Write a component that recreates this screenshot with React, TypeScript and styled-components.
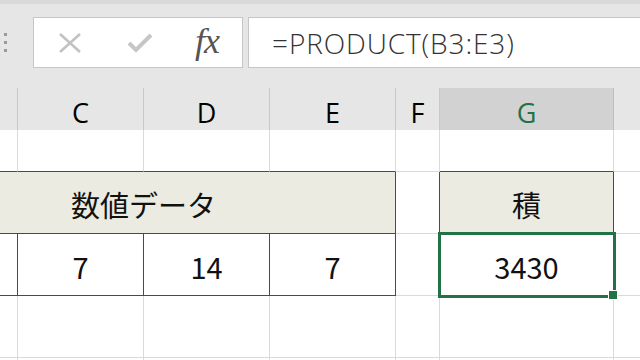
import React from 'react';
import styled, { createGlobalStyle } from 'styled-components';

const GlobalStyle = createGlobalStyle`
  html, body {
    margin: 0;
    padding: 0;
    background: #ffffff;
    overflow: hidden;
  }
`;

const GREEN = '#217346';
const GRID = '#dadada';
const DARK = '#4a4a4a';

const Page = styled.div`
  width: 640px;
  height: 360px;
  overflow: hidden;
  display: flex;
  flex-direction: column;
  background: #ffffff;
  font-family: "Noto Sans CJK JP", "Noto Sans", sans-serif;
`;

const TopStrip = styled.div`
  height: 4px;
  background: #d9d9d9;
  flex-shrink: 0;
`;

const FormulaBar = styled.div`
  height: 84px;
  flex-shrink: 0;
  background: #e6e6e6;
  display: flex;
  align-items: flex-start;
  padding: 13px 0 0 4px;
  box-sizing: border-box;
`;

const Grip = styled.div`
  width: 3px;
  margin-top: 16px;
  display: flex;
  flex-direction: column;
  gap: 5px;
  margin-right: 26px;

  span {
    width: 3px;
    height: 3px;
    background: #9a9a9a;
  }
`;

const ButtonBox = styled.div`
  width: 210px;
  height: 51px;
  box-sizing: border-box;
  background: #ffffff;
  border: 1px solid #c6c6c6;
  display: flex;
  align-items: center;
`;

const IconSlot = styled.div<{ $w: number }>`
  width: ${p => p.$w}px;
  display: flex;
  justify-content: center;
  align-items: center;
`;

const Fx = styled.span`
  font-family: "Liberation Serif", "DejaVu Serif", serif;
  font-style: italic;
  font-size: 36px;
  color: #555555;
  line-height: 1;
  margin-top: -4px;
  letter-spacing: -1px;
`;

const FormulaInput = styled.div`
  flex: 1;
  height: 51px;
  margin-left: 5px;
  box-sizing: border-box;
  background: #ffffff;
  border: 1px solid #c6c6c6;
  border-right: none;
  display: flex;
  align-items: center;
  padding-left: 23px;
  font-family: "Open Sans", "Noto Sans", sans-serif;
  font-weight: 300;
  font-size: 28px;
  color: #333333;
  letter-spacing: 0.9px;
`;

const COLS = '126px 126px 126px 126px 44px 174px 126px';

const HeaderRow = styled.div`
  display: grid;
  grid-template-columns: ${COLS};
  height: 42px;
  margin-left: -108px;
  flex-shrink: 0;
`;

const ColHead = styled.div<{ $active?: boolean }>`
  box-sizing: border-box;
  background: ${p => (p.$active ? '#d2d2d2' : '#e6e6e6')};
  border-right: 1px solid ${p => (p.$active ? '#bdbdbd' : '#c9c9c9')};
  border-bottom: ${p => (p.$active ? `3px solid ${GREEN}` : '2px solid #a9a9a9')};
  display: flex;
  align-items: center;
  justify-content: center;
  padding-top: ${p => (p.$active ? '6px' : '5px')};
  font-family: "Open Sans", "Noto Sans", sans-serif;
  font-size: 27px;
  color: ${p => (p.$active ? GREEN : '#000000')};
`;

const Body = styled.div`
  display: grid;
  grid-template-columns: ${COLS};
  grid-template-rows: 42px 62px 62px 62px 62px;
  margin-left: -108px;
`;

type Edge = 'dark' | 'grid';

const Cell = styled.div<{ $r?: Edge; $b?: Edge; $fill?: string; $span?: number }>`
  box-sizing: border-box;
  position: relative;
  grid-column: ${p => (p.$span ? `span ${p.$span}` : 'auto')};
  border-right: 1px solid ${p => (p.$r === 'dark' ? DARK : GRID)};
  border-bottom: 1px solid ${p => (p.$b === 'dark' ? DARK : GRID)};
  background: ${p => p.$fill || '#ffffff'};
  display: flex;
  align-items: center;
  justify-content: center;
  font-size: 29px;
  color: #111111;
  padding-top: 2px;
`;

const Selection = styled.div`
  position: absolute;
  z-index: 2;
  left: -2px;
  top: -2px;
  width: 178px;
  height: 66px;
  box-sizing: border-box;
  border: 3px solid ${GREEN};
  pointer-events: none;
`;

const FillHandle = styled.div`
  position: absolute;
  right: -4px;
  bottom: -4px;
  width: 8px;
  height: 8px;
  background: ${GREEN};
  box-shadow: 0 0 0 1px #ffffff;
`;

const BEIGE = '#ecebe1';

// B and H sit mostly off screen, so their letters are not visible
const columns = [
  { id: 'B', label: '' },
  { id: 'C', label: 'C' },
  { id: 'D', label: 'D' },
  { id: 'E', label: 'E' },
  { id: 'F', label: 'F' },
  { id: 'G', label: 'G' },
  { id: 'H', label: '' },
];

const App: React.FC = () => {
  return (
    <Page>
      <GlobalStyle />
      <TopStrip />
      <FormulaBar>
        <Grip>
          <span />
          <span />
          <span />
        </Grip>
        <ButtonBox>
          <IconSlot $w={72}>
            <svg width="24" height="20" viewBox="0 0 24 20">
              <path d="M2 1 L22 19 M22 1 L2 19" stroke="#c2c2c2" strokeWidth="2.6" fill="none" />
            </svg>
          </IconSlot>
          <IconSlot $w={68}>
            <svg width="26" height="22" viewBox="0 0 26 22">
              <path d="M2 11 L9 18 L24 3" stroke="#c6c6c6" strokeWidth="4" fill="none" />
            </svg>
          </IconSlot>
          <IconSlot $w={66}>
            <Fx>fx</Fx>
          </IconSlot>
        </ButtonBox>
        <FormulaInput>=PRODUCT(B3:E3)</FormulaInput>
      </FormulaBar>

      <HeaderRow>
        {columns.map(c => (
          <ColHead key={c.id} $active={c.id === 'G'}>
            {c.label}
          </ColHead>
        ))}
      </HeaderRow>

      <Body>
        {/* row 2 */}
        <Cell $b="dark" />
        <Cell $b="dark" />
        <Cell $b="dark" />
        <Cell $b="dark" />
        <Cell />
        <Cell $b="dark" />
        <Cell />

        {/* row 3: headings */}
        <Cell $span={4} $r="dark" $b="dark" $fill={BEIGE}>
          数値データ
        </Cell>
        <Cell $r="dark" />
        <Cell $r="dark" $b="dark" $fill={BEIGE}>
          積
        </Cell>
        <Cell />

        {/* row 4: values */}
        <Cell $r="dark" $b="dark" />
        <Cell $r="dark" $b="dark">7</Cell>
        <Cell $r="dark" $b="dark">14</Cell>
        <Cell $r="dark" $b="dark">7</Cell>
        <Cell $r="dark" />
        <Cell $r="dark" $b="dark">
          3430
          <Selection>
            <FillHandle />
          </Selection>
        </Cell>
        <Cell />

        {/* row 5 */}
        {columns.map(c => (
          <Cell key={`r5${c.id}`} />
        ))}
        {/* row 6 */}
        {columns.map(c => (
          <Cell key={`r6${c.id}`} />
        ))}
      </Body>
    </Page>
  );
};

export default App;
